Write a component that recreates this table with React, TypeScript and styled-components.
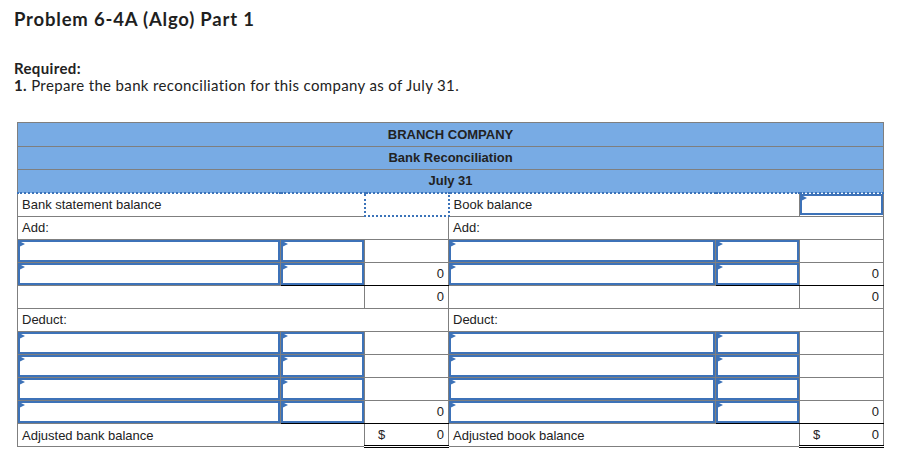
import styled, { createGlobalStyle, css } from "styled-components";

const GlobalStyle = createGlobalStyle`
  body {
    margin: 0;
    background: #ffffff;
    color: #222222;
  }
`;

const Page = styled.div`
  padding: 7px 0 0 14px;
`;

const Title = styled.h1`
  color: #1f1f1f;
  font-family: Lato, "Open Sans", sans-serif;
  font-size: 18.5px;
  font-weight: 700;
  letter-spacing: 0.8px;
  line-height: 24px;
  margin: 0 0 29px;
`;

const Instructions = styled.div`
  color: #222222;
  font-family: Lato, "Open Sans", sans-serif;
  font-size: 15px;
  letter-spacing: 0.35px;
  line-height: 17px;
  margin-bottom: 28px;
`;

const Strong = styled.b`
  font-weight: 700;
`;

const Sheet = styled.table`
  border: 1px solid #7f7f7f;
  border-collapse: collapse;
  color: #222222;
  font-family: "Liberation Sans", Arial, sans-serif;
  font-size: 13px;
  margin-left: 3px;
  table-layout: fixed;
  width: 866px;
`;

const Cell = styled.td`
  border: 1px solid #7f7f7f;
  height: 22px;
  line-height: 22px;
  padding: 0;
  white-space: nowrap;
`;

const HeaderCell = styled(Cell)<{ $tall?: boolean }>`
  background: #78abe4;
  font-weight: 700;
  height: ${({ $tall }) => ($tall ? "23px" : "22px")};
  line-height: ${({ $tall }) => ($tall ? "23px" : "22px")};
  text-align: center;
`;

const DottedRow = styled.tr`
  & > td {
    border-top: 2px dotted #3b73b9;
    height: 21px;
    line-height: 21px;
  }
`;

const FinalRow = styled.tr`
  & > td {
    height: 21px;
    line-height: 21px;
  }
`;

const LabelCell = styled(Cell)<{ $dottedLeft?: boolean }>`
  padding-left: 4px;
  ${({ $dottedLeft }) =>
    $dottedLeft &&
    css`
      border-left: 2px dotted #3b73b9;
    `}
`;

const DottedBox = styled(Cell)`
  border: 2px dotted #3b73b9;
`;

const AmountCell = styled(Cell)<{ $rule?: "single" | "double" }>`
  padding: 0 4px 0 13px;
  text-align: right;
  ${({ $rule }) =>
    $rule === "single" &&
    css`
      border-bottom: 1px solid #000000;
    `}
  ${({ $rule }) =>
    $rule === "double" &&
    css`
      border-bottom: 3px double #000000;
    `}
`;

const AmountInner = styled.div`
  display: flex;
  justify-content: space-between;
`;

const FieldCell = styled(Cell)<{ $rule?: boolean }>`
  ${({ $rule }) =>
    $rule &&
    css`
      border-bottom: 1px solid #000000;
    `}
`;

const Field = styled.div<{ $compact?: boolean }>`
  border: 2px solid #3d72b8;
  box-sizing: border-box;
  height: ${({ $compact }) => ($compact ? "21px" : "22px")};
  position: relative;
  width: 100%;

  &::before {
    border-bottom: 3px solid transparent;
    border-left: 6px solid #3d72b8;
    border-top: 3px solid transparent;
    content: "";
    left: -1px;
    position: absolute;
    top: -1px;
  }
`;

type Rule = "single" | "double";

function Amount({ value, rule, dollar }: { value?: string; rule?: Rule; dollar?: boolean }) {
  return (
    <AmountCell $rule={rule}>
      <AmountInner>
        <span>{dollar ? "$" : ""}</span>
        <span>{value ?? ""}</span>
      </AmountInner>
    </AmountCell>
  );
}

function EntryHalf({ total, last }: { total?: string; last?: boolean }) {
  return (
    <>
      <FieldCell>
        <Field />
      </FieldCell>
      <FieldCell $rule={last}>
        <Field />
      </FieldCell>
      <Amount value={total} rule={last ? "single" : undefined} />
    </>
  );
}

function EntryRow({ total, last }: { total?: string; last?: boolean }) {
  return (
    <tr>
      <EntryHalf total={total} last={last} />
      <EntryHalf total={total} last={last} />
    </tr>
  );
}

export default function App() {
  return (
    <>
      <GlobalStyle />
      <Page>
        <Title>Problem 6-4A (Algo) Part 1</Title>
        <Instructions>
          <Strong>Required:</Strong>
          <br />
          <Strong>1.</Strong> Prepare the bank reconciliation for this company as of July 31.
        </Instructions>
        <Sheet>
          <colgroup>
            <col style={{ width: 263 }} />
            <col style={{ width: 84 }} />
            <col style={{ width: 84 }} />
            <col style={{ width: 267 }} />
            <col style={{ width: 84 }} />
            <col style={{ width: 84 }} />
          </colgroup>
          <tbody>
            <tr>
              <HeaderCell colSpan={6} $tall>
                BRANCH COMPANY
              </HeaderCell>
            </tr>
            <tr>
              <HeaderCell colSpan={6}>Bank Reconciliation</HeaderCell>
            </tr>
            <tr>
              <HeaderCell colSpan={6}>July 31</HeaderCell>
            </tr>
            <DottedRow>
              <LabelCell colSpan={2}>Bank statement balance</LabelCell>
              <DottedBox />
              <LabelCell colSpan={2} $dottedLeft>
                Book balance
              </LabelCell>
              <FieldCell>
                <Field $compact />
              </FieldCell>
            </DottedRow>
            <tr>
              <LabelCell colSpan={3}>Add:</LabelCell>
              <LabelCell colSpan={3}>Add:</LabelCell>
            </tr>
            <EntryRow />
            <EntryRow total="0" last />
            <tr>
              <Cell colSpan={2} />
              <Amount value="0" />
              <Cell colSpan={2} />
              <Amount value="0" />
            </tr>
            <tr>
              <LabelCell colSpan={3}>Deduct:</LabelCell>
              <LabelCell colSpan={3}>Deduct:</LabelCell>
            </tr>
            <EntryRow />
            <EntryRow />
            <EntryRow />
            <EntryRow total="0" last />
            <FinalRow>
              <LabelCell colSpan={2}>Adjusted bank balance</LabelCell>
              <Amount value="0" rule="double" dollar />
              <LabelCell colSpan={2}>Adjusted book balance</LabelCell>
              <Amount value="0" rule="double" dollar />
            </FinalRow>
          </tbody>
        </Sheet>
      </Page>
    </>
  );
}
